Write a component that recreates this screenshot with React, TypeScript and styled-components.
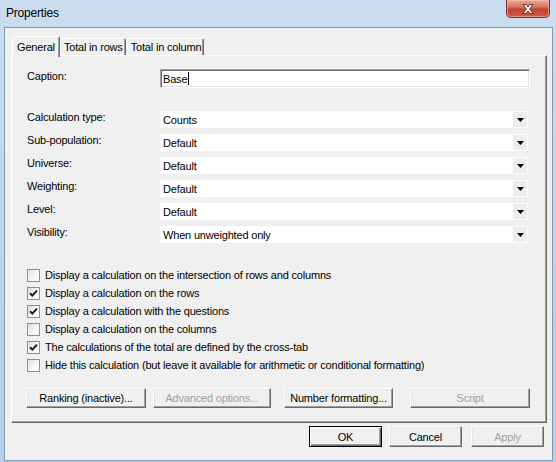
import React from "react";
import styled, { createGlobalStyle } from "styled-components";

const UI_FONT = `"Liberation Sans", Arial, sans-serif`;

const GlobalStyle = createGlobalStyle`
  html, body { margin: 0; padding: 0; }
  body { width: 556px; height: 462px; overflow: hidden; background: #c4d8ee; }
  * { box-sizing: border-box; }
`;

const Window = styled.div`
  width: 556px;
  height: 462px;
  display: flex;
  flex-direction: column;
  background: linear-gradient(180deg, #cbddf1 0%, #bfd5ed 45%, #b7cfea 100%);
  font-family: ${UI_FONT};
  font-size: 11px;
  letter-spacing: -0.18px;
  color: #000;
`;

const TitleBar = styled.div`
  height: 27px;
  flex: none;
  display: flex;
  align-items: flex-start;
  justify-content: space-between;
  padding: 0 6px 0 6px;
`;

const Title = styled.div`
  font-size: 12px;
  line-height: 26px;
  letter-spacing: -0.2px;
`;

const CloseButton = styled.div`
  width: 44px;
  height: 18px;
  border: 1px solid #7e3128;
  border-top: none;
  border-radius: 0 0 5px 5px;
  background: linear-gradient(180deg, #e9a99c 0%, #d8765f 40%, #c4432f 55%, #cf5b41 100%);
  box-shadow: inset 0 0 0 1px rgba(255, 210, 200, 0.45);
  display: flex;
  align-items: center;
  justify-content: center;
`;

const Client = styled.div`
  flex: 1;
  margin: 0 3px 1px 4px;
  border: 1px solid #8298b1;
  background: #f0f0f0;
  display: flex;
  flex-direction: column;
  padding: 8px 5px 0 6px;
`;

const TabStrip = styled.div`
  height: 19px;
  display: flex;
  align-items: flex-end;
  padding-left: 1px;
  position: relative;
  z-index: 1;
`;

const Tab = styled.div<{ $active?: boolean }>`
  height: ${(p) => (p.$active ? "21px" : "17px")};
  margin-bottom: ${(p) => (p.$active ? "-2px" : "0")};
  padding: ${(p) => (p.$active ? "3px 4px 0 4px" : "1px 2px 0 3px")};
  margin-left: ${(p) => (p.$active ? "0" : "1px")};
  background: #f0f0f0;
  border-style: solid;
  border-width: 1px 1px 0 1px;
  border-color: #ffffff #696969 transparent #ffffff;
  box-shadow: inset -1px 0 0 #a0a0a0;
  border-radius: 2px 2px 0 0;
  line-height: 14px;
  white-space: nowrap;
  &:nth-child(2) {
    margin-left: 0;
  }
`;

const Panel = styled.div`
  height: 368px;
  border-style: solid;
  border-width: 1px;
  border-color: #ffffff #696969 #696969 #ffffff;
  box-shadow: inset -1px -1px 0 #a0a0a0;
  padding: 13px 0 0 15px;
  display: flex;
  flex-direction: column;
`;

const FieldRow = styled.div`
  display: flex;
  align-items: center;
`;

const FieldLabel = styled.div`
  width: 133px;
  flex: none;
  line-height: 13px;
  padding-bottom: 4px;
`;

const CaptionInput = styled.div`
  width: 370px;
  height: 19px;
  background: #fff;
  border-style: solid;
  border-width: 1px;
  border-color: #a0a0a0 #ffffff #ffffff #a0a0a0;
  box-shadow: inset 1px 1px 0 #696969, inset -1px -1px 0 #e3e3e3;
  padding-left: 2px;
  display: flex;
  align-items: center;
`;

const Caret = styled.span`
  display: inline-block;
  width: 1px;
  height: 13px;
  background: #000;
  margin-left: 1px;
`;

const SelectList = styled.div`
  margin-top: 23px;
  display: flex;
  flex-direction: column;
  gap: 6px;
`;

const SelectBox = styled.div`
  width: 368px;
  height: 17px;
  background: #fff;
  display: flex;
  align-items: center;
  justify-content: space-between;
  padding-left: 3px;
`;

const DropArrow = styled.div`
  width: 14px;
  height: 15px;
  margin-right: 1px;
  background: #ededed;
  display: flex;
  align-items: center;
  justify-content: center;
`;

const CheckList = styled.div`
  margin-top: 24px;
  display: flex;
  flex-direction: column;
`;

const CheckRow = styled.div`
  height: 18px;
  display: flex;
  align-items: flex-start;
`;

const CheckBox = styled.div`
  width: 13px;
  height: 13px;
  margin-top: 2px;
  margin-right: 5px;
  flex: none;
  border: 1px solid #8f8f8f;
  background: linear-gradient(135deg, #dedede 0%, #f6f6f6 55%, #ffffff 100%);
  display: flex;
  align-items: center;
  justify-content: center;
`;

const CheckText = styled.div`
  line-height: 17px;
  white-space: nowrap;
`;

const ActionRow = styled.div`
  margin-top: 13px;
  display: flex;
`;

const Button = styled.div<{ $w: number; $ml?: number; $disabled?: boolean; $default?: boolean; $h?: number }>`
  width: ${(p) => p.$w}px;
  height: ${(p) => p.$h ?? 20}px;
  margin-left: ${(p) => p.$ml ?? 0}px;
  flex: none;
  background: #f0f0f0;
  border-style: solid;
  border-width: 1px;
  border-color: ${(p) => (p.$default ? "#000" : "#ffffff #696969 #696969 #ffffff")};
  box-shadow: ${(p) =>
    p.$default
      ? "inset 1px 1px 0 #ffffff, inset -1px -1px 0 #696969, inset -2px -2px 0 #a0a0a0"
      : "inset -1px -1px 0 #a0a0a0, inset 1px 1px 0 #e3e3e3"};
  color: ${(p) => (p.$disabled ? "#a0a0a0" : "#000")};
  display: flex;
  align-items: center;
  justify-content: center;
  white-space: nowrap;
`;

const FooterRow = styled.div`
  margin-top: 3px;
  display: flex;
  justify-content: flex-end;
  padding-right: 3px;
`;

const selects: [string, string][] = [
  ["Calculation type:", "Counts"],
  ["Sub-population:", "Default"],
  ["Universe:", "Default"],
  ["Weighting:", "Default"],
  ["Level:", "Default"],
  ["Visibility:", "When unweighted only"],
];

const checks: [string, boolean][] = [
  ["Display a calculation on the intersection of rows and columns", false],
  ["Display a calculation on the rows", true],
  ["Display a calculation with the questions", true],
  ["Display a calculation on the columns", false],
  ["The calculations of the total are defined by the cross-tab", true],
  ["Hide this calculation (but leave it available for arithmetic or conditional formatting)", false],
];

const CloseGlyph = () => (
  <svg width="14" height="12" viewBox="0 0 14 12">
    <path
      d="M2 1.5 L5 1.5 L7 4 L9 1.5 L12 1.5 L8.6 6 L12 10.5 L9 10.5 L7 8 L5 10.5 L2 10.5 L5.4 6 Z"
      fill="#ffffff"
      stroke="#5a2a24"
      strokeWidth="0.9"
      strokeLinejoin="round"
    />
  </svg>
);

const ArrowGlyph = () => (
  <svg width="7" height="4" viewBox="0 0 7 4">
    <path d="M0 0 L7 0 L3.5 4 Z" fill="#000" />
  </svg>
);

const CheckGlyph = () => (
  <svg width="11" height="11" viewBox="0 0 11 11">
    <path d="M2 5.2 L4.3 7.6 L9 2.6" fill="none" stroke="#1a1a1a" strokeWidth="2" />
  </svg>
);

export default function App() {
  return (
    <>
      <GlobalStyle />
      <Window>
        <TitleBar>
          <Title>Properties</Title>
          <CloseButton>
            <CloseGlyph />
          </CloseButton>
        </TitleBar>
        <Client>
          <TabStrip>
            <Tab $active>General</Tab>
            <Tab>Total in rows</Tab>
            <Tab>Total in column</Tab>
          </TabStrip>
          <Panel>
            <FieldRow>
              <FieldLabel>Caption:</FieldLabel>
              <CaptionInput>
                Base
                <Caret />
              </CaptionInput>
            </FieldRow>
            <SelectList>
              {selects.map(([label, value]) => (
                <FieldRow key={label}>
                  <FieldLabel>{label}</FieldLabel>
                  <SelectBox>
                    {value}
                    <DropArrow>
                      <ArrowGlyph />
                    </DropArrow>
                  </SelectBox>
                </FieldRow>
              ))}
            </SelectList>
            <CheckList>
              {checks.map(([text, on]) => (
                <CheckRow key={text}>
                  <CheckBox>{on && <CheckGlyph />}</CheckBox>
                  <CheckText>{text}</CheckText>
                </CheckRow>
              ))}
            </CheckList>
            <ActionRow>
              <Button $w={120} $ml={-1}>Ranking (inactive)...</Button>
              <Button $w={118} $ml={7} $disabled>Advanced options...</Button>
              <Button $w={109} $ml={13}>Number formatting...</Button>
              <Button $w={120} $ml={17} $disabled>Script</Button>
            </ActionRow>
          </Panel>
          <FooterRow>
            <Button $w={73} $h={21} $default>OK</Button>
            <Button $w={73} $h={21} $ml={7}>Cancel</Button>
            <Button $w={73} $h={21} $ml={9} $disabled>Apply</Button>
          </FooterRow>
        </Client>
      </Window>
    </>
  );
}
